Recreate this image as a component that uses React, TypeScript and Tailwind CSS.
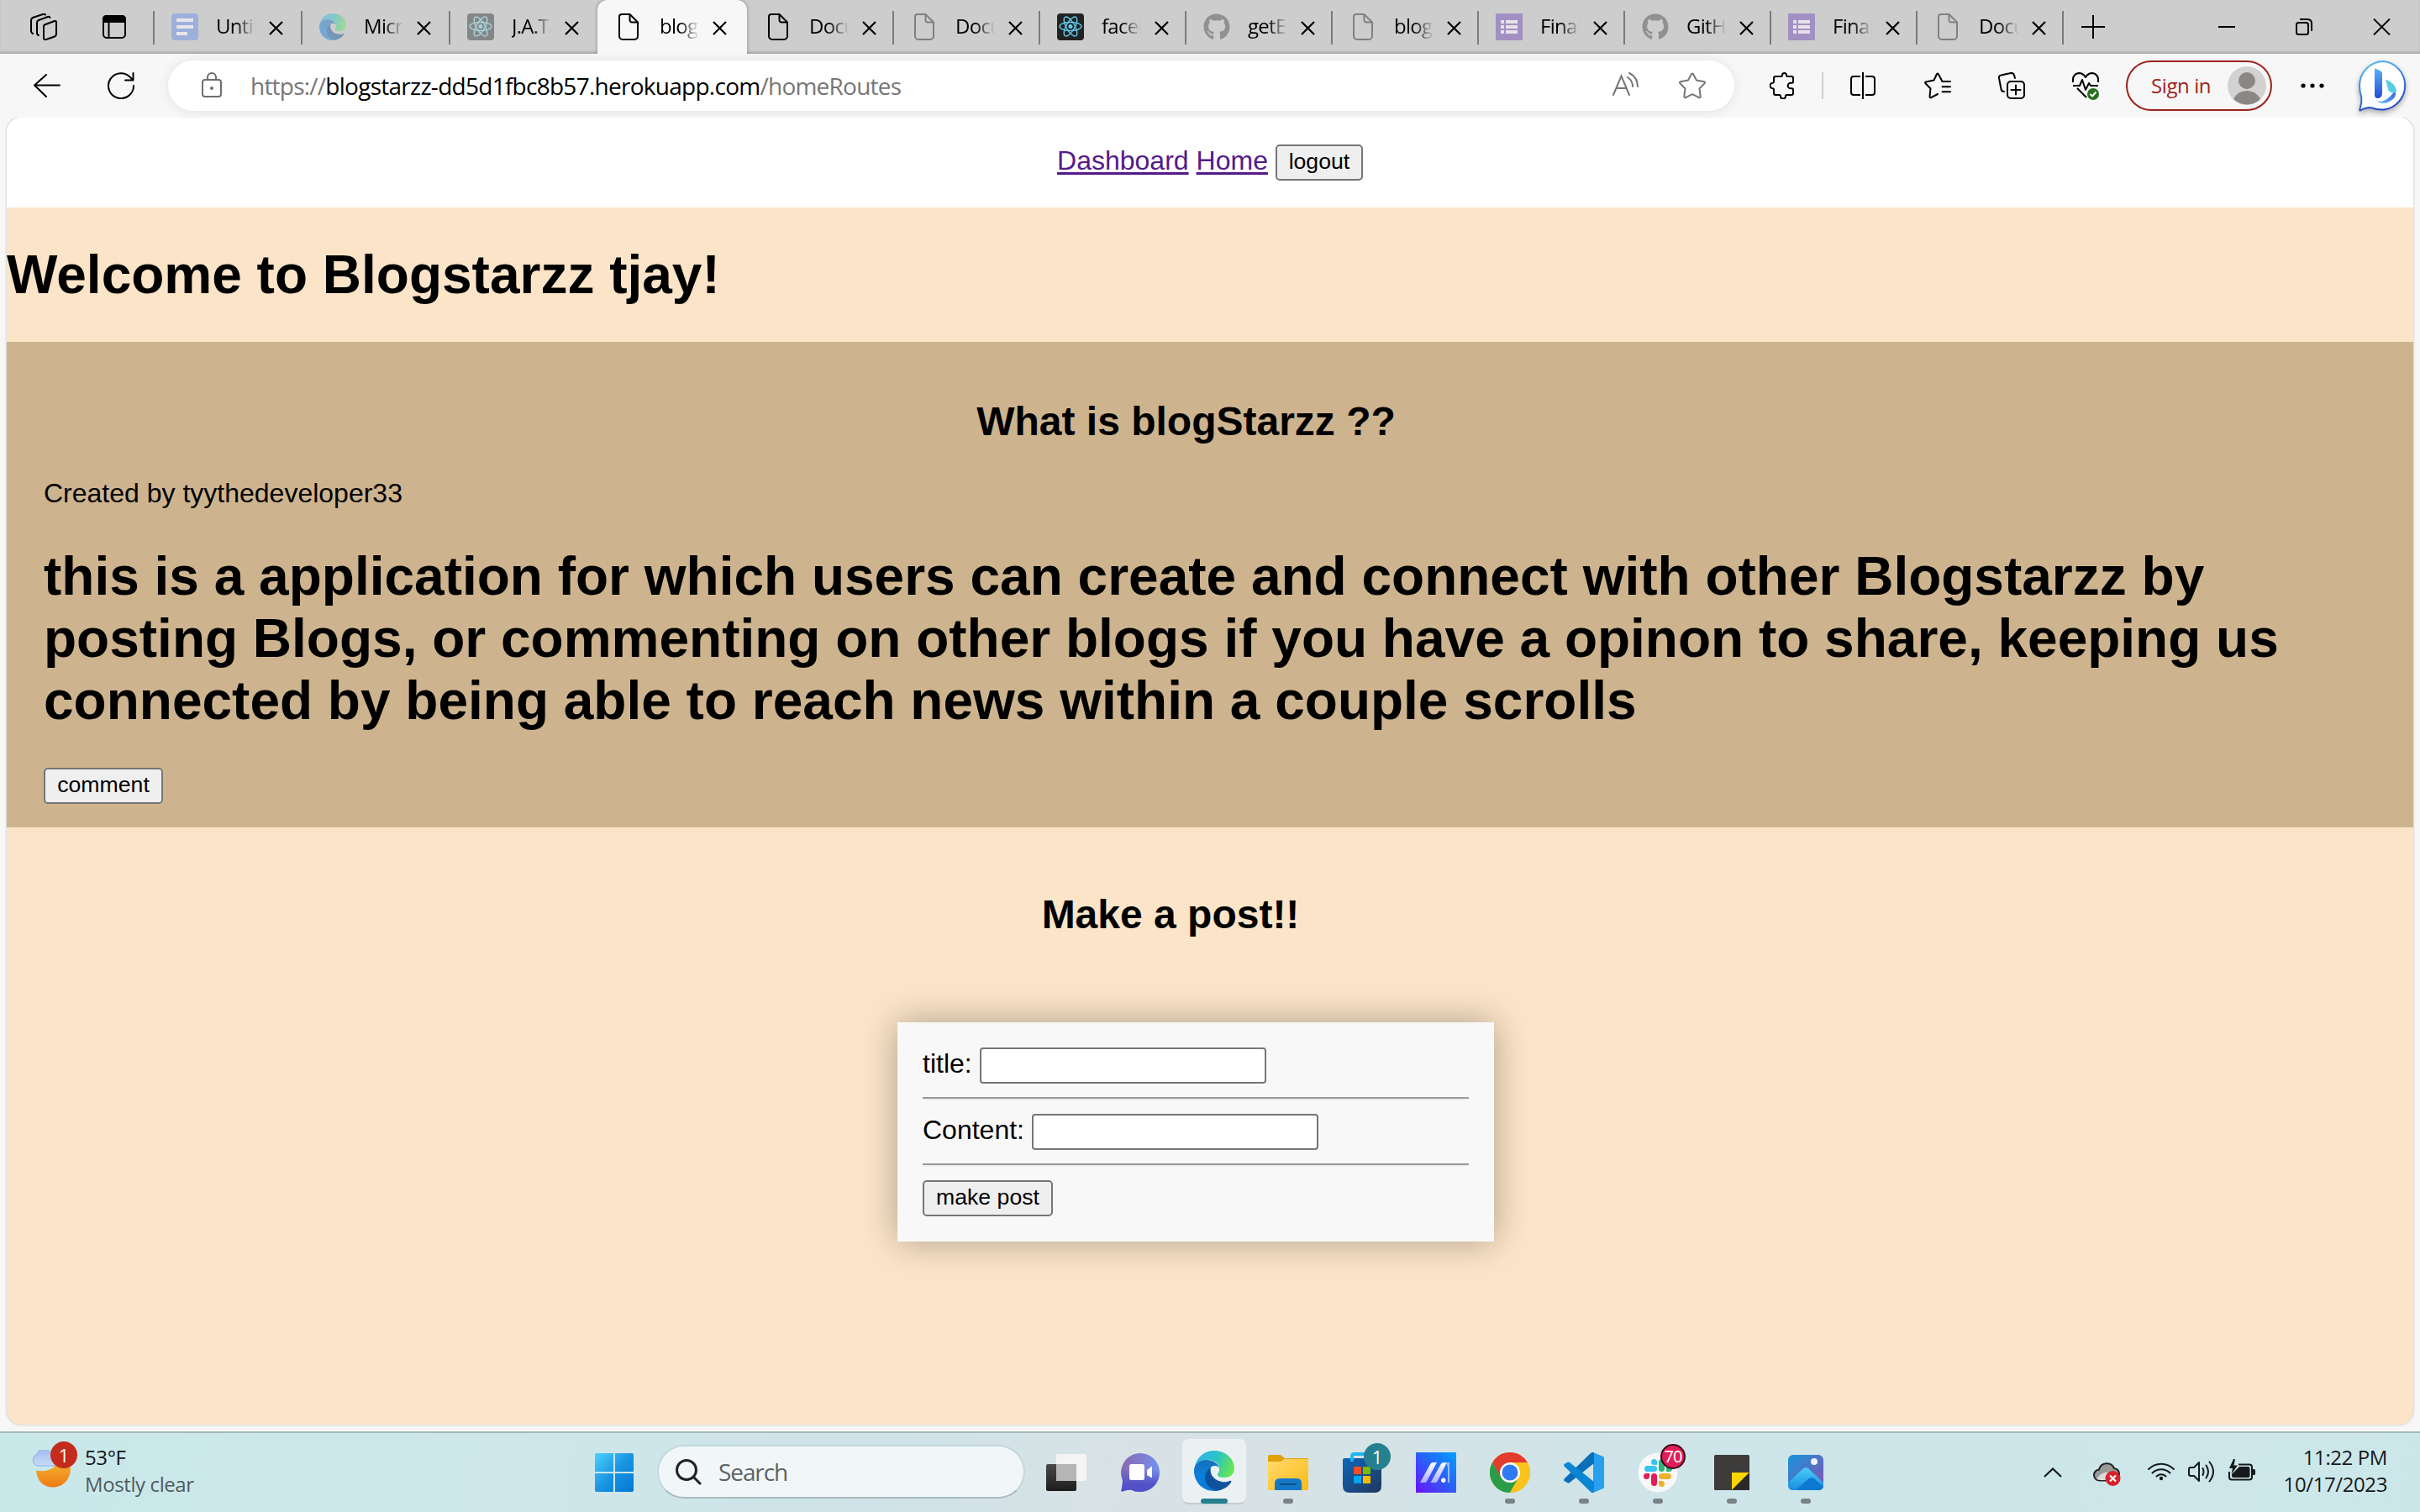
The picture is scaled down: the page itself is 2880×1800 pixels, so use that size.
import React from "react";
import { FaGithub } from "react-icons/fa";

const PageIcon = ({ color }: { color: string }) => (
  <svg className="size-8" viewBox="0 0 32 32" fill="none" stroke={color} strokeWidth="2" strokeLinejoin="round">
    <path d="M8 1h9.5L27 10.500V27a4 4 0 0 1-4 4H9a4 4 0 0 1-4-4V4a3 3 0 0 1 3-3z" />
    <path d="M17.500 1v7a2.500 2.500 0 0 0 2.500 2.500h7" />
  </svg>
);

const ReactIcon = ({ bg, fg }: { bg: string; fg: string }) => (
  <svg className="size-8" viewBox="0 0 32 32" fill="none" stroke={fg} strokeWidth="1.400">
    <rect width="32" height="32" rx="4" fill={bg} stroke="none" />
    <ellipse cx="16" cy="15.500" rx="13" ry="5" />
    <ellipse cx="16" cy="15.500" rx="13" ry="5" transform="rotate(60 16 15.500)" />
    <ellipse cx="16" cy="15.500" rx="13" ry="5" transform="rotate(120 16 15.500)" />
    <circle cx="16" cy="15.500" r="2.500" fill={fg} stroke="none" />
  </svg>
);

const DocsIcon = () => (
  <svg className="size-8" viewBox="0 0 32 32">
    <rect width="32" height="32" rx="4" fill="#9dafdb" />
    <path d="M6 6h20v4H6zM6 14h20v4H6zM6 22h13v4H6z" fill="#e6e6e8" />
  </svg>
);

const FormsIcon = () => (
  <svg className="size-8" viewBox="0 0 32 32">
    <rect width="32" height="32" rx="1" fill="#a390c3" />
    <path d="M6 8h4v4H6zM12 8h14v4H12zM6 14h4v4H6zM12 14h14v4H12zM6 20h4v4H6zM12 20h14v4H12z" fill="#e6e2ea" />
  </svg>
);

const EdgeIcon = ({ id, className }: { id: string; className: string }) => (
  <svg className={className} viewBox="0 0 48 48">
    <defs>
      <linearGradient id={id + "a"} x1="0" y1="0.300" x2="1" y2="0.600">
        <stop offset="0" stopColor="#2fb4ee" />
        <stop offset="0.500" stopColor="#2cc3c4" />
        <stop offset="1" stopColor="#69e84f" />
      </linearGradient>
      <linearGradient id={id + "b"} x1="0.500" y1="0" x2="0.400" y2="1">
        <stop offset="0" stopColor="#146fb8" />
        <stop offset="0.500" stopColor="#0b7fdc" />
        <stop offset="1" stopColor="#0a78d6" />
      </linearGradient>
      <linearGradient id={id + "c"} x1="0" y1="0" x2="1" y2="0.500">
        <stop offset="0" stopColor="#0c4f97" />
        <stop offset="1" stopColor="#13549f" />
      </linearGradient>
    </defs>
    <path d="M1 19C3 8 12 0 24 0c14 0 24 10 24 21 0 7-5 11-11 11-6 0-9-1-9-3.500 0-1.500 2-2.500 2-6C30 15 24 11 15 11 8 11 3 14 1 19z" fill={"url(#" + id + "a)"} />
    <path d="M0 24c0-8 6-13 14-13 8 0 14.500 4 15.500 9-1.500-2-7-3-9.500 0-7 9 1 22 13 26-3 1.500-6 2-9 2C10 48 0 37 0 24z" fill={"url(#" + id + "b)"} />
    <path d="M20 20c-3 2-7 7-7 12 0 8 7 15 15 15.500 7-1 13-4.500 16-10 .8-1.500-.2-2.200-1.500-1.500C33 40.500 17 33 20 20z" fill={"url(#" + id + "c)"} />
  </svg>
);

const github = <FaGithub className="size-8 text-[#8f9193]" />;
const grayPage = <PageIcon color="#808080" />;

type TabInfo = { title: string; icon: React.ReactNode; active?: boolean; narrow?: boolean; noLine?: boolean };
const tabs: TabInfo[] = [
  { title: "Untitled", icon: <DocsIcon /> },
  { title: "Microsoft", icon: <EdgeIcon id="tabedge" className="size-8 opacity-45" /> },
  { title: "J.A.Tate", icon: <ReactIcon bg="#858686" fg="#a9d3dd" />, noLine: true },
  { title: "blogstarzz", icon: <PageIcon color="#000" />, active: true, noLine: true },
  { title: "Document", icon: <PageIcon color="#000" />, narrow: true },
  { title: "Document", icon: grayPage, narrow: true },
  { title: "facebook", icon: <ReactIcon bg="#222" fg="#61cfee" />, narrow: true },
  { title: "getElement", icon: github, narrow: true },
  { title: "blogstarzz", icon: grayPage, narrow: true },
  { title: "Final", icon: <FormsIcon />, narrow: true },
  { title: "GitHub", icon: github, narrow: true },
  { title: "Final", icon: <FormsIcon />, narrow: true },
  { title: "Document", icon: grayPage, narrow: true },
];

const Tab = ({ t }: { t: TabInfo }) => (
  <div
    className={
      "relative flex h-full shrink-0 items-center pl-[21px] " +
      (t.narrow ? "w-[174px] " : t.active ? "w-[178px] " : "w-[176px] ") +
      (t.active ? "rounded-t-[12px] bg-[#f7f7f7] shadow-[0_0_4px_rgba(0,0,0,0.350)]" : "")
    }
  >
    {t.icon}
    <div className="ml-[21px] h-[62px] w-[47px] overflow-hidden whitespace-nowrap text-[24px] leading-[60px] tracking-[-0.700px] text-black [mask-image:linear-gradient(to_right,black_50%,transparent_100%)]">
      {t.title}
    </div>
    <svg className="ml-4 mt-0.5 size-[17px]" viewBox="0 0 17 17" stroke="#000" strokeWidth="2.200">
      <path d="M1 1l15 15M16 1L1 16" />
    </svg>
    {!t.noLine && <div className="absolute right-[-1px] top-[13px] h-10 w-0.5 bg-[#7b7b7b]" />}
  </div>
);

const TabBar = () => (
  <div className="flex h-16 items-center bg-[#cdcdcd] shadow-[inset_0_-3px_3px_-1px_rgba(0,0,0,0.200)]">
    <div className="relative flex h-full w-[183px] shrink-0 items-center pl-9">
      <svg className="size-8" viewBox="0 0 32 32" fill="none" stroke="#000" strokeWidth="2" strokeLinejoin="round" strokeLinecap="round">
        <path d="M17 13.500l12-4.500q2-.5 2 1.500v14q0 2-2 3l-10 3.500q-3 1-3-2V16q0-2 1-2.500z" />
        <path d="M10 26q-2-.5-2-3V11q0-2 2-3l11-4q2-.5 2.500 1" />
        <path d="M3 24q-2-1-2-3V8q0-2 2-3l12-4q2-.5 3 .500" />
      </svg>
      <svg className="ml-[54px] h-7 w-7" viewBox="0 0 28 28" fill="none" stroke="#000" strokeWidth="2">
        <rect x="1" y="1" width="26" height="26" rx="4" />
        <path d="M1 5q0-4 4-4h18q4 0 4 4v3H1z" fill="#000" />
        <path d="M7.500 8v19" />
      </svg>
      <div className="absolute right-[-1px] top-[13px] h-10 w-0.5 bg-[#7b7b7b]" />
    </div>
    {tabs.map((t, i) => (
      <Tab key={i} t={t} />
    ))}
    <svg className="ml-[22px] size-7" viewBox="0 0 28 28" stroke="#000" strokeWidth="2">
      <path d="M14 0v28M0 14h28" />
    </svg>
    <div className="ml-auto flex items-center gap-[72px] pr-[35px]">
      <svg className="h-5 w-5" viewBox="0 0 20 20" stroke="#000" strokeWidth="2">
        <path d="M0 10h20" />
      </svg>
      <svg className="h-5 w-5" viewBox="0 0 20 20" fill="none" stroke="#000" strokeWidth="2">
        <rect x="1" y="5" width="14" height="14" rx="2.500" />
        <path d="M5 1h9q5 0 5 5v9" />
      </svg>
      <svg className="h-5 w-[21px]" viewBox="0 0 20 20" stroke="#000" strokeWidth="1.900">
        <path d="M.5.500l19 19M19.500.500l-19 19" />
      </svg>
    </div>
  </div>
);

const starPath = "M14.800 2.500q1.200-2 2.400 0L21 9.500l9 1.700q1.700.6.600 1.900L24.500 19.500l1.200 9.500q-.2 1.700-1.700 1.200L16 26.200l-8 4q-1.500.5-1.700-1.200l1.200-9.500-6.100-6.400q-1.100-1.300.6-1.900l9-1.700z";

const ToolBar = () => (
  <div className="relative flex h-[76px] items-center bg-[#f7f7f7] text-black">
    <svg className="ml-10 h-7 w-8" viewBox="0 0 32 28" fill="none" stroke="#000" strokeWidth="2" strokeLinecap="round" strokeLinejoin="round">
      <path d="M31 13.500H1M15 1L1 13.500 15 27" />
    </svg>
    <svg className="ml-14 size-8" viewBox="0 0 32 32" fill="none" stroke="#000" strokeWidth="2" strokeLinecap="round" strokeLinejoin="round">
      <path d="M31 16A15 15 0 1 1 27.500 6.500L30 9M30.500 1v8.500H21" />
    </svg>
    <div className="ml-10 flex h-[60px] w-[1864px] items-center rounded-[30px] bg-white pl-10 pr-[34px] shadow-[0_1px_14px_rgba(0,0,0,0.090)]">
      <svg className="-mt-0.5 h-[30px] w-6" viewBox="0 0 24 30" fill="none" stroke="#6e6e6e" strokeWidth="2">
        <rect x="1" y="9" width="22" height="20" rx="3" />
        <path d="M7 9V6a5 5 0 0 1 10 0v3" />
        <circle cx="12" cy="19" r="2" fill="#6e6e6e" stroke="none" />
      </svg>
      <div className="ml-[34px] whitespace-nowrap text-[28px] leading-[58px] tracking-[-0.770px] text-[#767676]">
        https://<span className="tracking-[-0.730px] text-black">blogstarzz-dd5d1fbc8b57.herokuapp.com</span>/homeRoutes
      </div>
      <svg className="-mt-1 ml-auto h-7 w-[31px]" viewBox="0 0 31 28" fill="none" stroke="#767676" strokeWidth="2" strokeLinecap="round">
        <path d="M1 27L10.500 4.500 20 27M4.500 19h12M18 6q6 4 6 11M20 1q10 5 10 16" />
      </svg>
      <svg className="ml-12 size-8" viewBox="0 0 32 32" fill="none" stroke="#767676" strokeWidth="2" strokeLinejoin="round">
        <path d={starPath} />
      </svg>
    </div>
    <svg className="ml-[42px] h-8 w-[30px]" viewBox="0 0 30 32" fill="none" stroke="#000" strokeWidth="2" strokeLinejoin="round">
      <path d="M7 5h6.500q1.500 0 1.500-1.500a2.500 2.500 0 0 1 5 0q0 1.500 1.500 1.500H26q2 0 2 2v4.500q0 1.200-1.500 1.200h-1.500a3 3 0 0 0 0 6.600h1.500q1.500 0 1.500 1.200V25q0 2-2 2h-5.500q-1.500 0-1.500 1.500a3 3 0 0 1-6 0q0-1.500-1.500-1.500H7q-2 0-2-2v-4.500q0-1-1.200-1.200a3.300 3.300 0 0 1 0-6.600Q5 12.500 5 11.500V7q0-2 2-2z" />
    </svg>
    <div className="ml-8 h-8 w-0.5 bg-[#d0d0d0]" />
    <svg className="ml-8 h-8 w-[30px]" viewBox="0 0 30 32" fill="none" stroke="#000" strokeWidth="2">
      <path d="M15 0v32M12 5H4Q1 5 1 8v16q0 3 3 3h8M18 5H26q3 0 3 3v16q0 3-3 3h-8" />
    </svg>
    <svg className="ml-[58px] size-8" viewBox="0 0 32 32" fill="none" stroke="#000" strokeWidth="2" strokeLinejoin="round" strokeLinecap="round">
      <path d="M31 11H21.500L17 2.500q-1-2-2.200 0L11.500 9.500 2 11.500q-1.500.6-.5 1.800L7.500 19.500 6.500 29q.2 1.800 1.700 1.200L16 26M21.500 17.200H31M21.500 23.300H31" />
    </svg>
    <svg className="ml-14 size-8" viewBox="0 0 32 32" fill="none" stroke="#000" strokeWidth="2" strokeLinecap="round">
      <rect x="11" y="11" width="20" height="20" rx="4" />
      <path d="M21 15.500v11M15.500 21h11M7 23q-3 0-3.500-3L1 7Q.500 4 3.500 3.500L15 1q3-.500 4 2.500L20 7" />
    </svg>
    <svg className="ml-14 h-[34px] w-8" viewBox="0 0 32 34" fill="none" stroke="#000" strokeWidth="2" strokeLinejoin="round">
      <path d="M1 13Q0 3 8 2q5 0 8 5 3-5 8-5 8 1 7 11M1 17h8l3-7 4 12 4-8 2 3h9M6 20l11 11" />
      <circle cx="25" cy="27" r="7" fill="#27701f" stroke="none" />
      <path d="M21.500 27l2.500 2.500 4.500-5" stroke="#fff" />
    </svg>
    <div className="ml-8 flex h-[60px] w-[174px] items-center rounded-[30px] border-2 border-[#9c231b] pl-[28px]">
      <span className="w-[91px] whitespace-nowrap text-[24px] leading-[54px] tracking-[-0.400px] text-[#a0241d]">Sign in</span>
      <svg className="size-[46px]" viewBox="0 0 46 46">
        <circle cx="23" cy="23" r="23" fill="#d3d2d0" />
        <circle cx="23" cy="17" r="10" fill="#8a8886" />
        <path d="M7 39q5-10 16-10t16 10q-7 6.500-16 6.500T7 39z" fill="#8a8886" />
      </svg>
    </div>
    <svg className="ml-[34px] h-2 w-7" viewBox="0 0 28 8">
      <circle cx="3" cy="4" r="2.600" /><circle cx="14" cy="4" r="2.600" /><circle cx="25" cy="4" r="2.600" />
    </svg>
    <svg className="ml-[41px] h-[62px] w-[60px] drop-shadow-[0_3px_3px_rgba(0,0,0,0.300)]" viewBox="0 0 60 62">
      <defs>
        <linearGradient id="bingring" x1="0" y1="0" x2="0.400" y2="1">
          <stop offset="0" stopColor="#58c8ee" /><stop offset="0.500" stopColor="#3f86ea" /><stop offset="1" stopColor="#2449bf" />
        </linearGradient>
        <linearGradient id="bingb" x1="0" y1="0" x2="0" y2="1">
          <stop offset="0" stopColor="#55b4f6" /><stop offset="1" stopColor="#2848d8" />
        </linearGradient>
        <linearGradient id="bingc" x1="0" y1="1" x2="1" y2="0">
          <stop offset="0" stopColor="#6fc6f4" /><stop offset="1" stopColor="#2d55df" />
        </linearGradient>
      </defs>
      <path d="M30 2a29 29 0 0 1 0 57.500Q22 60 16 57.500 10 56 2 60.500q-1 .3-.7-1Q4 52 3.300 45 1 38 1 31A29 29 0 0 1 30 2z" fill="#fff" stroke="url(#bingring)" strokeWidth="2" />
      <path d="M20 45q1 6 8 4.500 8-2 15.500-13 2 6-2.500 10.500-6 5-13 5-7-1-8-7z" fill="url(#bingc)" />
      <path d="M32 23.500q11 4 13 13-1 5-6.500 2.500l-3-2z" fill="#58cde0" />
      <path d="M19 11.500q0-1.500 2-.5l6 3q1 .8 1 2v24q0 4-3 5.500-6 2-6-4z" fill="url(#bingb)" />
    </svg>
  </div>
);

const NativeButton = ({ children, className }: { children: string; className: string }) => (
  <button className={"h-[43px] shrink-0 whitespace-nowrap rounded-[5px] border-2 border-[#767676] bg-[#efefef] text-center text-[26.670px] leading-[36px] text-black " + className}>
    <span className="block h-[39px]">{children}</span>
  </button>
);

const Rule = () => <div className="h-1 border-b-2 border-t-2 border-b-[#eee] border-t-[#9a9a9a]" />;

const WebPage = () => (
  <div className="mx-2 flex h-[1556px] flex-col overflow-hidden rounded-[17px] bg-[#fbe4c8] font-['Liberation_Sans',Arial,sans-serif] text-[32px] leading-[37px] text-black shadow-[0_0_3px_rgba(0,0,0,0.250)]">
    <nav className="flex h-[107px] shrink-0 items-start justify-center gap-[9px] bg-white pt-8 text-[#551a8b]">
      <a className="mt-px underline decoration-[3px] underline-offset-[3px]">Dashboard</a>
      <a className="mt-px underline decoration-[3px] underline-offset-[3px]">Home</a>
      <NativeButton className="w-[104px]">logout</NativeButton>
    </nav>
    <h1 className="my-[43px] shrink-0 text-[64px] font-bold leading-[74px]">Welcome to Blogstarzz tjay!</h1>
    <section className="h-[578px] shrink-0 bg-[#cdb48f] pl-11 pt-[67px]">
      <div className="w-[2719px]">
        <h2 className="text-center text-[48px] font-bold leading-[55px]">What is blogStarzz ??</h2>
        <p className="mt-10">Created by tyythedeveloper33</p>
        <h1 className="my-[43px] text-[64px] font-bold leading-[74px]">
          this is a application for which users can create and connect with other Blogstarzz by posting Blogs, or commenting on other blogs if you have a opinon to share, keeping us connected by being able to reach news within a couple scrolls
        </h1>
        <NativeButton className="block w-[142px]">comment</NativeButton>
      </div>
    </section>
    <h2 className="mt-[76px] w-[2770px] text-center text-[48px] font-bold leading-[55px]">Make a post!!</h2>
    <form className="ml-[1060px] mt-[101px] h-[261px] w-[710px] bg-[#f8f8f8] p-[30px] shadow-[0_0_40px_rgba(0,0,0,0.300)]">
      <label className="flex h-[43px] gap-[9px]">
        <span className="pt-px">title:</span>
        <input className="h-[43px] w-[341px] rounded-[4px] border-2 border-[#767676] bg-white" />
      </label>
      <div className="my-4"><Rule /></div>
      <label className="flex h-[43px] gap-[9px]">
        <span className="pt-px">Content:</span>
        <input className="h-[43px] w-[341px] rounded-[4px] border-2 border-[#767676] bg-white" />
      </label>
      <div className="my-4"><Rule /></div>
      <NativeButton className="block w-[155px]">make post</NativeButton>
    </form>
  </div>
);

const AppSlot = ({ children, dot }: { children: React.ReactNode; dot?: boolean }) => (
  <div className="relative flex h-full w-[88px] items-center justify-center">
    {children}
    {dot && <div className="absolute bottom-[10px] left-[38px] h-1.5 w-3 rounded-full bg-[#7a8283]" />}
  </div>
);

const TaskBar = () => (
  <div className="flex h-24 items-stretch border-t-2 border-[#a6b8bc] bg-[linear-gradient(100deg,#c9e8ea_0%,#cde7ea_20%,#cfe3e8_36%,#d8e2e5_47%,#d5e2e6_56%,#cee5e9_70%,#cce7ea_100%)]">
    <div className="flex w-[708px] pl-[38px]">
      <div className="relative w-[63px]">
        <svg className="mt-[20px] h-[50px] w-[50px]" viewBox="0 0 50 50">
          <defs>
            <linearGradient id="moon" x1="0" y1="0" x2="0" y2="1"><stop offset="0" stopColor="#f5bc35" /><stop offset="1" stopColor="#ee7b15" /></linearGradient>
            <linearGradient id="cloud" x1="0" y1="0" x2="0" y2="1"><stop offset="0" stopColor="#9fbdf0" /><stop offset="1" stopColor="#c9dbf6" /></linearGradient>
          </defs>
          <path d="M33 8q10 4 13 14c0 13-9 22.500-21 22.500-11 0-19-7-20-20q23 4 28-16.500z" fill="url(#moon)" />
          <path d="M7 19a7 7 0 0 1-1-13.500A8.500 8.500 0 0 1 22 4q9 0 9 9 0 6-6 6z" fill="url(#cloud)" stroke="#8faee8" strokeWidth="1" />
        </svg>
        <div className="absolute left-[22px] top-[10px] flex size-8 items-center justify-center rounded-full bg-[#c42b1c] text-[22px] leading-8 text-white">1</div>
      </div>
      <div className="pt-[13px] text-[24px] leading-[32px] tracking-[-0.400px]">
        <div className="text-[#101415]">53°F</div>
        <div className="text-[#505c5e]">Mostly clear</div>
      </div>
    </div>
    <svg className="mt-6 size-[46px]" viewBox="0 0 46 46">
      <defs>
        <linearGradient id="win" x1="0" y1="0" x2="1" y2="1"><stop offset="0" stopColor="#4bd2ff" /><stop offset="0.500" stopColor="#1a95e2" /><stop offset="1" stopColor="#0078d4" /></linearGradient>
      </defs>
      <path d="M2 0h20v22H0V2q0-2 2-2zM24 0h20q2 0 2 2v20H24zM0 24h22v22H2q-2 0-2-2zM24 24h22v20q0 2-2 2H24z" fill="url(#win)" />
    </svg>
    <div className="ml-7 mt-3.5 flex h-16 w-[438px] items-center rounded-full border-2 border-[#c3d7da] border-b-[#a9bcc0] bg-[#f1f7f9] pl-5">
      <svg className="size-[31px]" viewBox="0 0 31 31" fill="none" stroke="#222" strokeWidth="3" strokeLinecap="round">
        <circle cx="13" cy="13" r="11.500" /><path d="M21.500 21.500l7.500 7.500" />
      </svg>
      <span className="ml-5 text-[28px] leading-[60px] tracking-[-1.100px] text-[#5d6263]">Search</span>
    </div>
    <div className="ml-[5px] flex">
      <AppSlot>
        <svg className="h-11 w-12" viewBox="0 0 48 44">
          <defs><linearGradient id="tv" x1="0" y1="0" x2="0" y2="1"><stop offset="0" stopColor="#4a4a49" /><stop offset="1" stopColor="#1d1d1d" /></linearGradient></defs>
          <rect x="0" y="12" width="36" height="32" rx="2" fill="url(#tv)" /><rect x="12" y="0" width="36" height="32" rx="2" fill="#f4f4f4" /><rect x="12" y="12" width="24" height="20" fill="#b5b5b5" />
        </svg>
      </AppSlot>
      <AppSlot>
        <svg className="size-[46px]" viewBox="0 0 46 46">
          <defs><linearGradient id="chat" x1="0" y1="0.300" x2="0.900" y2="0.500"><stop offset="0" stopColor="#8a68ae" /><stop offset="1" stopColor="#7590ee" /></linearGradient><linearGradient id="chat2" x1="0" y1="0" x2="0" y2="1"><stop offset="0.400" stopColor="#5558c8" stopOpacity="0" /><stop offset="0.800" stopColor="#5350c8" /></linearGradient></defs>
          <path d="M23 0a23 23 0 0 1 0 46q-7 0-11-2.500-5 0-10 2-2 .5-1.500-1.500Q2 38 2 32A23 23 0 0 1 23 0z" fill="url(#chat)" />
          <path d="M23 0a23 23 0 0 1 0 46q-7 0-11-2.500-5 0-10 2-2 .5-1.500-1.500Q2 38 2 32A23 23 0 0 1 23 0z" fill="url(#chat2)" />
          <rect x="10" y="13" width="18" height="19" rx="2.500" fill="#fff" /><path d="M31 20l6-4.500v14L31 26z" fill="#fff" />
        </svg>
      </AppSlot>
      <AppSlot>
        <div className="absolute left-[6px] top-[7px] flex h-[78px] w-[76px] items-center justify-center rounded-[8px] border-b-2 border-[#c3cbce] bg-[#ebf1f3]">
          <EdgeIcon id="taskedge" className="size-12" />
        </div>
        <div className="absolute bottom-[10px] left-[28px] h-1.5 w-8 rounded-full bg-[#25808f]" />
      </AppSlot>
      <AppSlot dot>
        <svg className="h-[42px] w-12" viewBox="0 0 48 42">
          <defs><linearGradient id="fold" x1="0" y1="0" x2="1" y2="1"><stop offset="0" stopColor="#ffdb6e" /><stop offset="1" stopColor="#fcba17" /></linearGradient></defs>
          <path d="M0 2q0-2 2-2h13l5 4h26q2 0 2 2v5H0z" fill="#e1a10a" />
          <path d="M0 8h14q2 0 3.500-1.500L19 5h27q2 0 2 2v33q0 2-2 2H2q-2 0-2-2z" fill="url(#fold)" />
          <path d="M8 42V34q0-6 6-6h20q6 0 6 6v8z" fill="#1478c8" /><path d="M15 35h18" stroke="#0b4f86" strokeWidth="2" strokeLinecap="round" />
        </svg>
      </AppSlot>
      <AppSlot>
        <svg className="size-12" viewBox="0 0 48 48">
          <defs><linearGradient id="store" x1="0" y1="0" x2="1" y2="1"><stop offset="0" stopColor="#0b68ba" /><stop offset="1" stopColor="#23355c" /></linearGradient></defs>
          <path d="M1 9q0-2 2-2h42q2 0 2 2v31q0 8-8 8H9q-8 0-8-8z" fill="url(#store)" />
          <path d="M12 11V4q0-2 2-2h20q2 0 2 2v7" fill="none" stroke="#1fb4f2" strokeWidth="3.800" />
          <path d="M14 17h9v9h-9z" fill="#f25022" /><path d="M25 17h9v9h-9z" fill="#7fba00" /><path d="M14 28h9v9h-9z" fill="#00a4ef" /><path d="M25 28h9v9h-9z" fill="#ffb900" />
        </svg>
        <div className="absolute right-[10px] top-3 flex size-8 items-center justify-center rounded-full bg-[#26808f] text-[22px] leading-8 text-white">1</div>
      </AppSlot>
      <AppSlot>
        <svg className="size-12" viewBox="0 0 48 48">
          <defs><linearGradient id="asus" x1="0" y1="1" x2="1" y2="0"><stop offset="0" stopColor="#6a12fa" /><stop offset="0.500" stopColor="#2c5dfa" /><stop offset="1" stopColor="#00a2ff" /></linearGradient><linearGradient id="asus2" x1="0" y1="0" x2="0" y2="1"><stop offset="0" stopColor="#fff" /><stop offset="1" stopColor="#a9aefc" /></linearGradient></defs>
          <rect width="48" height="48" fill="url(#asus)" />
          <path d="M5 36L17.500 13.500q1-1.500 3-1.500H25L13 34.500Q12 36 10 36zM17.500 36L30 13.500q1-1.500 3-1.500h4L25.500 34.500Q24.500 36 22.500 36z" fill="url(#asus2)" />
          <path d="M36 12h4v24h-2V18z" fill="#9db9fd" /><circle cx="32.700" cy="33.300" r="2.700" fill="#fff" />
        </svg>
      </AppSlot>
      <AppSlot dot>
        <svg className="size-12" viewBox="0 0 48 48">
          <circle cx="24" cy="24" r="24" fill="#fcc31e" />
          <path d="M3.200 12A24 24 0 0 1 44.800 12H24L13.600 30z" fill="#e33b2e" />
          <path d="M3.200 12A24 24 0 0 0 24 48L34.400 30H13.600z" fill="#2a9c48" />
          <path d="M3.200 12L13.600 30 24 24V12z" fill="#e33b2e" />
          <path d="M24 12h20.800A24 24 0 0 1 24 48l10.400-18z" fill="#fcc31e" />
          <circle cx="24" cy="24" r="12" fill="#fff" /><circle cx="24" cy="24" r="9.500" fill="#2f7af0" />
        </svg>
      </AppSlot>
      <AppSlot dot>
        <svg className="size-12" viewBox="0 0 48 48">
          <path d="M35 0L47 5q1 .5 1 2v34q0 1.500-1 2L35 48z" fill="#27a0ef" />
          <path d="M0 33q0-1 1-2L32 1q1.500-1.500 4-1v13L7 36q-1.500 1-3 0L.5 34z" fill="#0a6fb8" />
          <path d="M0 15q0 1 1 2l31 30q1.500 1.500 4 1V35L7 12q-1.500-1-3 0L.5 14z" fill="#0c86d3" />
        </svg>
      </AppSlot>
      <AppSlot dot>
        <svg className="size-12" viewBox="0 0 48 48">
          <circle cx="24" cy="24" r="23.500" fill="#f8f8f8" />
          <g fill="#36c5f0"><rect x="8" y="16" width="15" height="7" rx="3.500" /><path d="M16 11.500a3.500 3.500 0 0 1 7 0V15h-3.500a3.500 3.500 0 0 1-3.500-3.500z" /></g>
          <g fill="#2eb67d"><rect x="25" y="8" width="7" height="15" rx="3.500" /><path d="M34 19.500a3.500 3.500 0 1 1 3.500 3.500H34z" /></g>
          <g fill="#ecb22e"><rect x="25" y="25" width="15" height="7" rx="3.500" /><path d="M25 34h3.500a3.500 3.500 0 1 1-3.500 3.500z" /></g>
          <g fill="#e01e5a"><rect x="16" y="25" width="7" height="15" rx="3.500" /><path d="M14 25v3.500a3.500 3.500 0 1 1-3.500-3.500z" /></g>
        </svg>
        <div className="absolute right-[11px] top-[13px] flex size-[30px] items-center justify-center rounded-full border-2 border-[#3d0717] bg-[#e01e5a] text-[20px] leading-[26px] tracking-[-1px] text-white">70</div>
      </AppSlot>
      <AppSlot dot>
        <svg className="size-[42px]" viewBox="0 0 42 42">
          <rect width="42" height="42" rx="1.500" fill="#3d3c3b" /><path d="M21 21h21L21 42z" fill="#fbd500" /><path d="M42 21v21H21z" fill="#2b2a29" />
        </svg>
      </AppSlot>
      <AppSlot dot>
        <svg className="size-[42px]" viewBox="0 0 42 42">
          <defs><linearGradient id="ph" x1="0" y1="0" x2="1" y2="1"><stop offset="0" stopColor="#1596dc" /><stop offset="1" stopColor="#8a4fb0" /></linearGradient><linearGradient id="ph2" x1="0" y1="0" x2="0" y2="1"><stop offset="0" stopColor="#48cdf8" /><stop offset="1" stopColor="#1a8de0" /></linearGradient></defs>
          <rect width="42" height="42" rx="6" fill="url(#ph)" />
          <path d="M0 33l17-16q4-4 8 0l17 16v3q0 6-6 6H6q-6 0-6-6z" fill="url(#ph2)" />
          <path d="M9 42l16-14q4-2 7 1l10 9q-2 4-6 4z" fill="#0d78d0" /><circle cx="31" cy="8" r="4" fill="#f2f4fa" />
        </svg>
      </AppSlot>
    </div>
    <div className="ml-auto flex items-center pr-[39px]">
      <svg className="h-3 w-[22px]" viewBox="0 0 22 12" fill="none" stroke="#16191a" strokeWidth="2.200"><path d="M1 11L11 1.500 21 11" /></svg>
      <svg className="ml-[37px] mt-1 h-7 w-[33px]" viewBox="0 0 33 28">
        <path d="M8 21.500a6.500 6.500 0 0 1-1-13A9.500 9.500 0 0 1 25 7q6 1 6 7t-5 7.500z" fill="#999" stroke="#222" strokeWidth="2" />
        <path d="M4 20q6-10 16-8v9H8z" fill="#d9dcdc" />
        <circle cx="23.500" cy="19" r="9" fill="#da2129" /><path d="M20 15.500l7 7M27 15.500l-7 7" stroke="#fff" strokeWidth="2.200" />
      </svg>
      <svg className="-mt-1 ml-8 h-[23px] w-8" viewBox="0 0 32 23" fill="none" stroke="#16191a" strokeWidth="2" strokeLinecap="round">
        <path d="M1 9a21 21 0 0 1 30 0M5.500 13.500a15 15 0 0 1 21 0M10.500 17.500a8 8 0 0 1 11 0" /><circle cx="16" cy="20" r="2.200" fill="#16191a" stroke="none" />
      </svg>
      <svg className="-mt-0.5 ml-4 h-[26px] w-8" viewBox="0 0 32 26" fill="none" stroke="#16191a" strokeWidth="2" strokeLinecap="round" strokeLinejoin="round">
        <path d="M1 10q0-2 2-2h4l6-6v22l-6-6H3q-2 0-2-2zM17.500 9q2 4 0 8M21.500 5.500q5 7.500 0 15M25.500 1.500q9 11.500 0 23" />
      </svg>
      <svg className="-mt-[7px] ml-4 h-[26px] w-8" viewBox="0 0 32 26">
        <path d="M12 6.500h13q3 0 3 3v12q0 3-3 3H4q-3 0-3-3V15" fill="none" stroke="#16191a" strokeWidth="2" />
        <path d="M13 9h10.500q2 0 2 2v9q0 2-2 2H6q-2 0-2-2v-2zM29 12h1.500q1.500 0 1.500 1.500v4q0 1.500-1.500 1.500H29z" fill="#16191a" />
        <path d="M6 0L1 11h4L3.500 18 11 7.500H6.500L8 0z" fill="#16191a" />
      </svg>
      <div className="ml-[34px] pb-1 text-right text-[24px] leading-8 tracking-[-0.400px] text-[#16191a]">
        <div>11:22 PM</div>
        <div>10/17/2023</div>
      </div>
    </div>
  </div>
);

export default function App() {
  return (
    <div className="flex h-[1800px] w-[2880px] flex-col overflow-hidden bg-[#f7f7f7] font-['Open_Sans','Noto_Sans',sans-serif]">
      <TabBar />
      <ToolBar />
      <WebPage />
      <div className="h-2 shrink-0" />
      <TaskBar />
    </div>
  );
}
